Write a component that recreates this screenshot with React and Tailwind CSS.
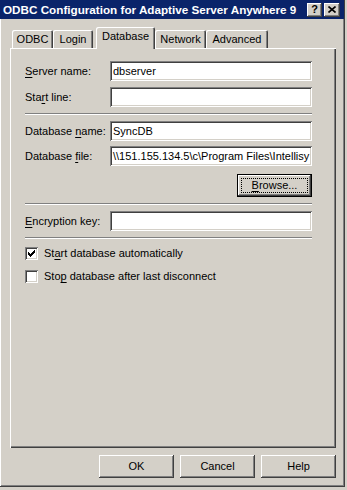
const raised =
  'bg-[#d4d0c8] shadow-[inset_-1px_-1px_#404040,inset_1px_1px_#ffffff,inset_-2px_-2px_#808080,inset_2px_2px_#d4d0c8]';
const sunken =
  'bg-white shadow-[inset_1px_1px_#808080,inset_-1px_-1px_#ffffff,inset_2px_2px_#404040,inset_-2px_-2px_#d4d0c8]';

function Accel({ text, at }) {
  if (at < 0) return text;
  return (
    <>
      {text.slice(0, at)}
      <span className="underline underline-offset-[2px]">{text[at]}</span>
      {text.slice(at + 1)}
    </>
  );
}

function Field({ label, at, value }) {
  return (
    <div className="flex items-center h-[20px]">
      <span className="w-[85px] shrink-0 whitespace-nowrap">
        <Accel text={label} at={at} />
      </span>
      <div className={`${sunken} w-[202px] h-[20px] flex items-center px-[3px] overflow-hidden whitespace-nowrap`}>
        {value}
      </div>
    </div>
  );
}

function Separator() {
  return <div className="h-[2px] border-t border-b border-t-[#808080] border-b-white" />;
}

function Checkbox({ checked, label, at }) {
  return (
    <div className="flex items-center h-[13px] gap-[6px]">
      <div className={`${sunken} w-[13px] h-[13px] flex items-center justify-center`}>
        {checked ? (
          <svg width="7" height="7" viewBox="0 0 7 7">
            <path d="M0 2h1v1h1v1h1V3h1V2h1V1h1V0h1v3H6v1H5v1H4v1H3v1H2V6H1V5H0z" fill="#000" />
          </svg>
        ) : null}
      </div>
      <span className="whitespace-nowrap">
        <Accel text={label} at={at} />
      </span>
    </div>
  );
}

const tabs = [
  { name: 'ODBC', w: 'w-[41px]' },
  { name: 'Login', w: 'w-[40px]' },
  { name: 'Database', w: 'w-[59px]', active: true },
  { name: 'Network', w: 'w-[51px]' },
  { name: 'Advanced', w: 'w-[62px]' },
];

function DialogButton({ children, focused }) {
  if (focused) {
    return (
      <div className="w-[75px] h-[23px] border border-black">
        <div className={`${raised} w-full h-full flex items-center justify-center p-[3px]`}>
          <div className="w-full h-full border border-dotted border-black flex items-center justify-center">
            {children}
          </div>
        </div>
      </div>
    );
  }
  return <div className={`${raised} w-[75px] h-[23px] flex items-center justify-center`}>{children}</div>;
}

export default function App() {
  return (
    <div className="w-[347px] h-[490px] bg-[#d4d0c8] overflow-hidden text-[11px] leading-none text-black font-['Liberation_Sans',Arial,sans-serif]">
      <div className="w-[345px] h-[487px] flex flex-col shadow-[inset_-1px_-1px_#404040,inset_1px_1px_#ffffff,inset_-2px_-2px_#808080]">
        <div className="h-[19px] w-[344px] bg-[#0a246a] flex items-center pl-[3px] pr-[4px]">
          <span className="flex-1 font-bold text-white text-[11.7px] whitespace-nowrap">
            ODBC Configuration for Adaptive Server Anywhere 9
          </span>
          <div className={`${raised} w-[15px] h-[14px] flex items-center justify-center font-bold text-[11px]`}>?</div>
          <div className={`${raised} w-[16px] h-[14px] ml-[2px] flex items-center justify-center`}>
            <svg width="8" height="7" viewBox="0 0 8 7">
              <path d="M0.5 0.5l7 6M7.5 0.5l-7 6" stroke="#000" strokeWidth="1.6" />
            </svg>
          </div>
        </div>

        <div className="pl-[10px] pr-[9px]">
          <div className="h-[29px] flex items-end pl-[2px]">
            {tabs.map((t) =>
              t.active ? (
                <div
                  key={t.name}
                  className={`${t.w} h-[22px] ml-[3px] -mb-[1px] relative z-10 bg-[#d4d0c8] rounded-t-[2px] shadow-[inset_1px_1px_#ffffff,inset_-1px_0_#404040,inset_-2px_0_#808080] flex items-start justify-center pt-[4px]`}
                >
                  {t.name}
                </div>
              ) : (
                <div
                  key={t.name}
                  className={`${t.w} h-[18px] bg-[#d4d0c8] rounded-t-[2px] shadow-[inset_1px_1px_#ffffff,inset_-1px_0_#404040,inset_-2px_0_#808080] flex items-start justify-center pt-[4px]`}
                >
                  {t.name}
                </div>
              ),
            )}
          </div>
          <div className="h-[400px] shadow-[inset_1px_1px_#ffffff,inset_-1px_-1px_#404040,inset_-2px_-2px_#808080] pt-[13px] pl-[15px] pr-[24px] flex flex-col">
            <Field label="Server name:" at={0} value="dbserver" />
            <div className="h-[6px]" />
            <Field label="Start line:" at={3} value="" />
            <div className="h-[6px]" />
            <Separator />
            <div className="h-[6px]" />
            <Field label="Database name:" at={9} value="SyncDB" />
            <div className="h-[5px]" />
            <Field label="Database file:" at={9} value="\\151.155.134.5\c\Program Files\Intellisy" />
            <div className="h-[8px]" />
            <div className="flex justify-end">
              <DialogButton focused>
                <Accel text="Browse..." at={0} />
              </DialogButton>
            </div>
            <div className="h-[6px]" />
            <Separator />
            <div className="h-[6px]" />
            <Field label="Encryption key:" at={0} value="" />
            <div className="h-[6px]" />
            <Separator />
            <div className="h-[8px]" />
            <Checkbox checked label="Start database automatically" at={2} />
            <div className="h-[10px]" />
            <Checkbox label="Stop database after last disconnect" at={3} />
          </div>
        </div>

        <div className="flex justify-end gap-[6px] pt-[7px] pr-[9px]">
          <DialogButton>OK</DialogButton>
          <DialogButton>Cancel</DialogButton>
          <DialogButton>Help</DialogButton>
        </div>
      </div>
    </div>
  );
}
